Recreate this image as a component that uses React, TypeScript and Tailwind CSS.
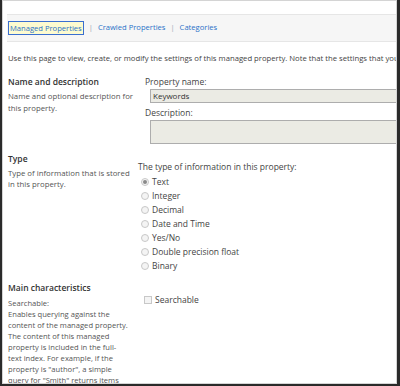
import React from 'react';

const font = { fontFamily: '"Open Sans", "Noto Sans", sans-serif' };

const types = ['Text', 'Integer', 'Decimal', 'Date and Time', 'Yes/No', 'Double precision float', 'Binary'];

const searchableLines = [
  'Searchable:',
  'Enables querying against the',
  'content of the managed property.',
  'The content of this managed',
  'property is included in the full-',
  'text index. For example, if the',
  'property is "author", a simple',
  'query for "Smith" returns items',
];

const Radio = ({ checked }: { checked?: boolean }) => (
  <span className="w-[8px] h-[8px] rounded-full border border-[#c8c8c8] bg-[#f4f4f4] flex items-center justify-center shrink-0">
    {checked && <span className="w-[4px] h-[4px] rounded-full bg-[#8a8a8a]" />}
  </span>
);

const App = () => {
  return (
    <div className="w-[400px] h-[386px] bg-white overflow-hidden border-l-2 border-r-[3px] border-b-2 border-[#2a2a2a]" style={font}>
      <div className="h-full border-t border-l border-r border-b border-[#d4d4d4] relative overflow-hidden">
        <div className="pl-[4px] pt-[13px]">
          <div className="h-[28px] bg-[#f6f6f6] border-t border-b border-[#e6e6e6] flex items-center text-[7.6px] text-[#2a72c8]">
            <span className="ml-[1px] px-[1px] bg-[#fdfbd0] border border-[#3a6fd0] leading-[12px]">Managed Properties</span>
            <span className="mx-[5px] text-[#9aa5b5]">|</span>
            <span>Crawled Properties</span>
            <span className="mx-[5px] text-[#9aa5b5]">|</span>
            <span>Categories</span>
          </div>
          <div className="mt-[10px] ml-[1px] text-[7.7px] text-[#444] whitespace-nowrap leading-[12px]">
            Use this page to view, create, or modify the settings of this managed property. Note that the settings that you
          </div>
          <div className="flex mt-[12px]">
            <div className="w-[131px] shrink-0 pl-[1px]">
              <div className="text-[8.5px] font-semibold text-[#333] leading-[12px]">Name and description</div>
              <div className="mt-[2px] w-[126px] text-[7.8px] text-[#555] leading-[12px]">Name and optional description for this property.</div>
            </div>
            <div className="pl-[7px] flex-1">
              <div className="text-[8.5px] text-[#444] leading-[12px]">Property name:</div>
              <div className="ml-[5px] mt-[1px] h-[14px] w-[300px] bg-[#ebebe4] border border-[#adadad] text-[8px] text-[#333] pl-[2px] leading-[12px]">Keywords</div>
              <div className="mt-[4px] text-[8.5px] text-[#444] leading-[12px]">Description:</div>
              <div className="ml-[5px] mt-[1px] h-[24px] w-[300px] bg-[#ebebe4] border border-[#adadad]" />
            </div>
          </div>
          <div className="flex mt-[9px]">
            <div className="w-[131px] shrink-0 pl-[1px]">
              <div className="text-[8.5px] font-semibold text-[#333] leading-[12px]">Type</div>
              <div className="mt-[3px] w-[122px] text-[7.8px] text-[#555] leading-[11px]">Type of information that is stored in this property.</div>
            </div>
            <div className="pt-[8px]">
              <div className="text-[8.5px] text-[#444] leading-[12px]">The type of information in this property:</div>
              <div className="ml-[3px] mt-[2px] flex flex-col">
                {types.map((t, i) => (
                  <div key={t} className="flex items-center gap-[3px] h-[14px] text-[8.5px] text-[#444]">
                    <Radio checked={i === 0} />
                    <span>{t}</span>
                  </div>
                ))}
              </div>
            </div>
          </div>
          <div className="flex mt-[9px]">
            <div className="w-[134px] shrink-0 pl-[1px]">
              <div className="text-[8.5px] font-semibold text-[#333] leading-[12px]">Main characteristics</div>
              <div className="mt-[4px] text-[7.6px] text-[#555] leading-[11px] whitespace-nowrap">
                {searchableLines.map((l) => (
                  <div key={l}>{l}</div>
                ))}
              </div>
            </div>
            <div className="pt-[12px] pl-[3px]">
              <div className="flex items-center gap-[3px] text-[8.5px] text-[#444]">
                <span className="w-[8px] h-[8px] border border-[#c8c8c8] bg-[#f4f4f4]" />
                <span>Searchable</span>
              </div>
            </div>
          </div>
        </div>
      </div>
    </div>
  );
};

export default App;
